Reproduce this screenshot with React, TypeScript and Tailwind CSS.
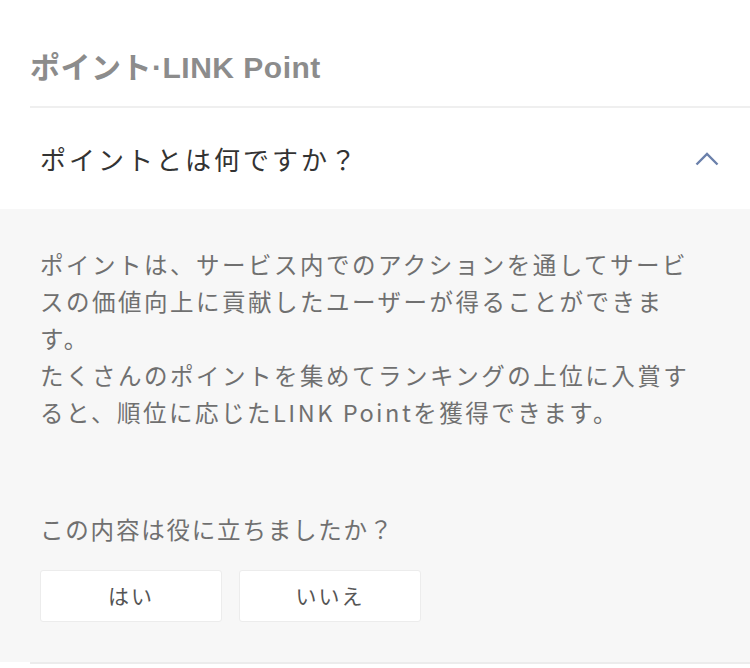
import React, { useState } from 'react';

const font = { fontFamily: '"Noto Sans CJK JP", "Noto Sans", sans-serif' };
const titleFont = { fontFamily: '"Liberation Sans", "Noto Sans CJK JP", sans-serif' };

const App: React.FC = () => {
  const [open, setOpen] = useState(true);

  return (
    <div className="w-[750px] min-h-[668px] bg-white" style={font}>
      <div className="pl-[30px] pt-[48px] pb-[18px]">
        <h2 className="text-[30px] leading-[40px] font-bold tracking-[0.5px] text-[#8c8c8c]" style={titleFont}>
          ポイント·LINK Point
        </h2>
      </div>
      <div className="ml-[30px] h-[2px] bg-[#efefef]" />

      <button
        onClick={() => setOpen(!open)}
        className="w-full h-[101px] flex items-center justify-between pl-[40px] pr-[31px] bg-white"
      >
        <span className="text-[26px] tracking-[3px] text-[#333333]">ポイントとは何ですか？</span>
        <svg width="24" height="14" viewBox="0 0 24 14" fill="none" className={open ? '' : 'rotate-180'}>
          <path d="M1.5 12.5L12 2l10.5 10.5" stroke="#6b80ab" strokeWidth="2.4" />
        </svg>
      </button>

      {open && (
        <div className="bg-[#f7f7f7] pl-[40px] pr-[40px] pt-[37px] pb-[40px]">
          <p className="text-[23.5px] leading-[37px] tracking-[2.5px] text-[#707070] w-[670px]">
            ポイントは、サービス内でのアクションを通してサービスの価値向上に貢献したユーザーが得ることができます。
            <br />
            たくさんのポイントを集めてランキングの上位に入賞すると、順位に応じたLINK Pointを獲得できます。
          </p>
          <p className="mt-[80px] text-[23.5px] leading-[36px] tracking-[1.8px] text-[#707070]">
            この内容は役に立ちましたか？
          </p>
          <div className="mt-[23px] flex gap-[17px]">
            <button className="w-[182px] h-[52px] bg-white border border-[#ececec] rounded-[3px] text-[21px] tracking-[2px] text-[#555555]">
              はい
            </button>
            <button className="w-[182px] h-[52px] bg-white border border-[#ececec] rounded-[3px] text-[21px] tracking-[2px] text-[#555555]">
              いいえ
            </button>
          </div>
        </div>
      )}
      <div className="ml-[30px] h-[2px] bg-[#ececec]" />
    </div>
  );
};

export default App;
